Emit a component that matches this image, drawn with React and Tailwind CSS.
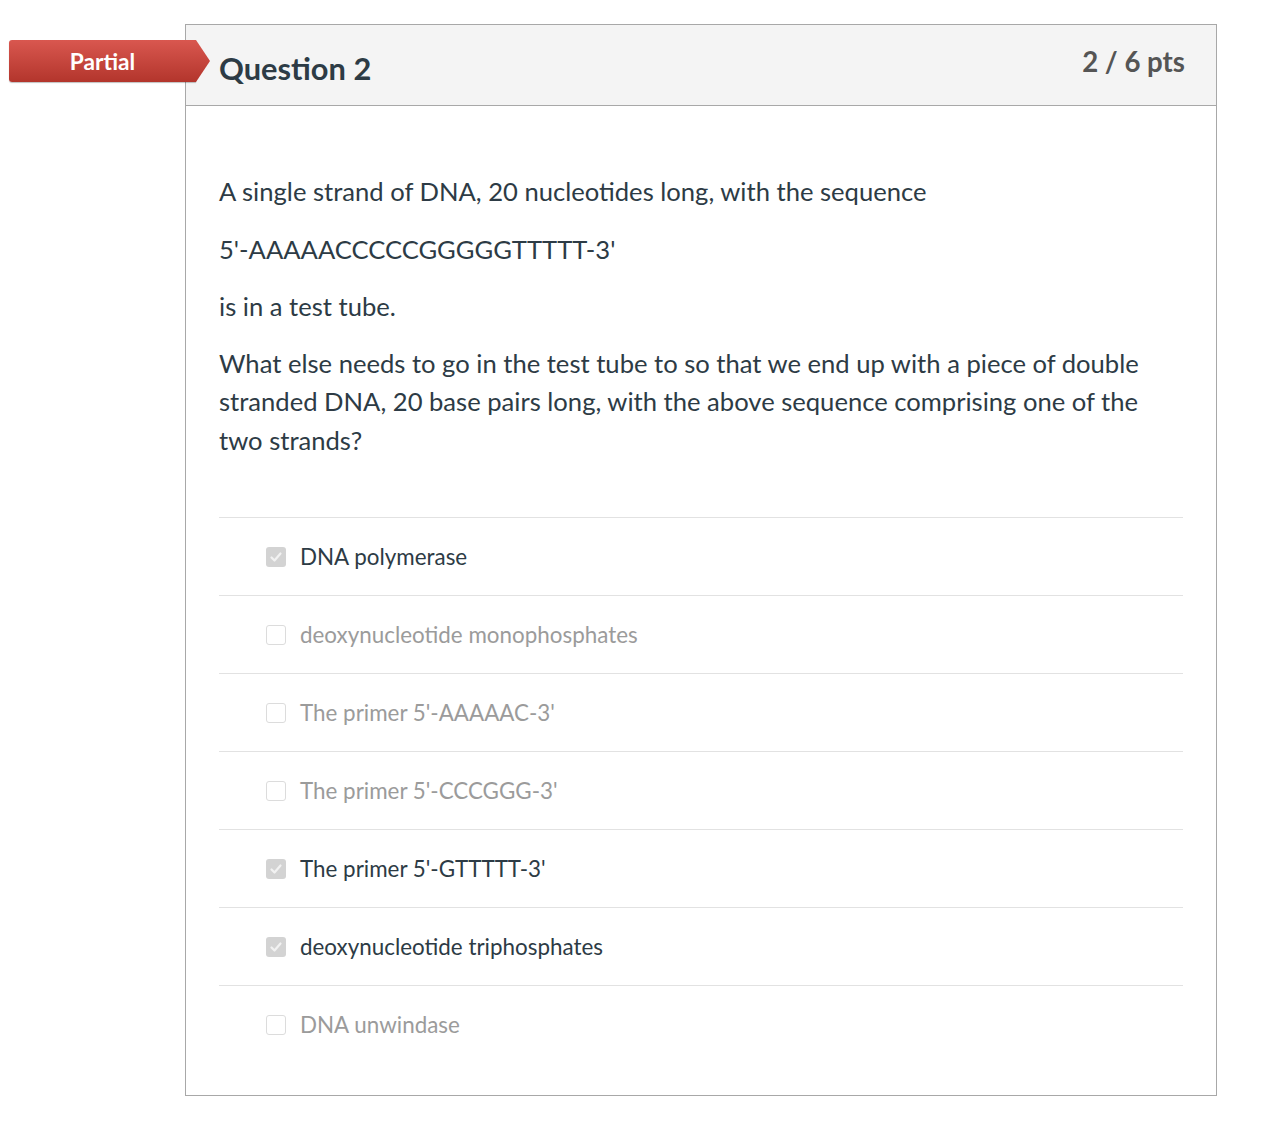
import React from "react";

const answers = [
  { text: "DNA polymerase", checked: true },
  { text: "deoxynucleotide monophosphates", checked: false },
  { text: "The primer 5'-AAAAAC-3'", checked: false },
  { text: "The primer 5'-CCCGGG-3'", checked: false },
  { text: "The primer 5'-GTTTTT-3'", checked: true },
  { text: "deoxynucleotide triphosphates", checked: true },
  { text: "DNA unwindase", checked: false },
];

function Box({ checked }) {
  if (checked) {
    return (
      <span className="flex h-5 w-5 items-center justify-center rounded-[3px] bg-[#d3d3d3]">
        <svg width="14" height="14" viewBox="0 0 14 14">
          <path d="M2.5 7.5 L5.5 10.5 L11.5 3.5" fill="none" stroke="#f2f2f2" strokeWidth="2.2" strokeLinecap="round" strokeLinejoin="round" />
        </svg>
      </span>
    );
  }
  return <span className="block h-5 w-5 rounded-[3px] border border-[#dcdcdc] bg-white" />;
}

export default function App() {
  return (
    <div className="min-h-screen bg-white pt-6 font-['Lato','Open_Sans',sans-serif]">
      <div className="relative ml-[185px] w-[1032px] border border-[#a8a8a8]">
        {/* badge */}
        <div className="absolute left-[-177px] top-[15px] flex h-[42px] items-center">
          <div className="flex h-[42px] w-[187px] items-center justify-center rounded-l-[3px] bg-gradient-to-b from-[#d9574f] to-[#b3352c] pt-[2px] shadow-[0_1px_1px_rgba(0,0,0,0.25)]">
            <span className="text-[22.7px] font-bold text-white">Partial</span>
          </div>
          <svg width="16" height="42" viewBox="0 0 16 42" className="-ml-px">
            <defs>
              <linearGradient id="bg" x1="0" y1="0" x2="0" y2="1">
                <stop offset="0" stopColor="#d9574f" />
                <stop offset="1" stopColor="#b3352c" />
              </linearGradient>
            </defs>
            <path d="M0 0 L1 0 L15 21 L1 42 L0 42 Z" fill="url(#bg)" />
          </svg>
        </div>

        <div className="flex h-[81px] items-start justify-between border-b border-[#a8a8a8] bg-[#f4f4f4] pl-[33px] pr-[31px]">
          <h2 className="mt-[29px] text-[30.8px] font-bold leading-none text-[#2d3b45]">Question 2</h2>
          <span className="mt-[23px] text-[27.6px] font-bold leading-none text-[#555]">2 / 6 pts</span>
        </div>

        <div className="px-[33px] pb-[32px] pt-[66px]">
          <div className="text-[25.6px] leading-[38.5px] text-[#2d3b45]">
            <p>A single strand of DNA, 20 nucleotides long, with the sequence</p>
            <p className="mt-[19px]">5'-AAAAACCCCCGGGGGTTTTT-3'</p>
            <p className="mt-[19px]">is in a test tube.</p>
            <p className="mt-[18px]">
              What else needs to go in the test tube to so that we end up with a piece of double stranded DNA, 20 base pairs long, with the above sequence comprising one of the two strands?
            </p>
          </div>

          <div className="mt-[58px]">
            {answers.map((a, i) => (
              <div key={i} className="flex h-[78px] items-center border-t border-[#e2e2e2] pl-[47px] pt-[1px]">
                <Box checked={a.checked} />
                <span className={"ml-[14px] text-[22.4px] " + (a.checked ? "text-[#2d3b45]" : "text-[#9b9b9b]")}>
                  {a.text}
                </span>
              </div>
            ))}
          </div>
        </div>
      </div>
    </div>
  );
}
